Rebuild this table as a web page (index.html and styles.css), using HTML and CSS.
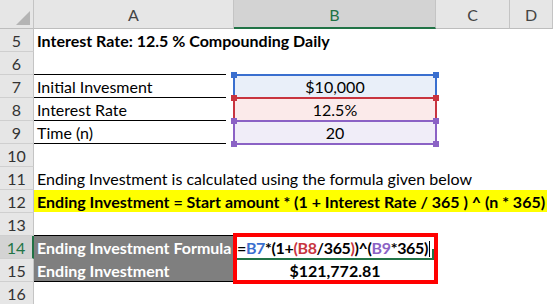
FILE: index.html
```html
<!DOCTYPE html>
<html>
<head>
<meta charset="utf-8">
<link rel="stylesheet" href="styles.css">
</head>
<body>
<div class="sheet">
  <div class="h corner"><svg width="14" height="14" viewBox="0 0 14 14"><polygon points="0,14 14,14 14,0" fill="#b4b4b4"/></svg></div>
  <div class="h col">A</div>
  <div class="h col sel">B</div>
  <div class="h col">C</div>
  <div class="h col">D</div>

  <div class="rh">5</div>
  <div class="c span bold">Interest Rate: 12.5 % Compounding Daily</div>

  <div class="rh">6</div>
  <div class="c bl"></div><div class="c"></div><div class="c"></div><div class="c"></div>

  <div class="rh">7</div>
  <div class="c bl">Initial Invesment</div>
  <div class="c ref r-blue"><span>$10,000</span><div class="box"><i class="sq tl"></i><i class="sq tr"></i><i class="sq bl2"></i><i class="sq br"></i></div></div>
  <div class="c"></div><div class="c"></div>

  <div class="rh">8</div>
  <div class="c bl">Interest Rate</div>
  <div class="c ref r-red"><span>12.5%</span><div class="box"><i class="sq tl"></i><i class="sq tr"></i><i class="sq bl2"></i><i class="sq br"></i></div></div>
  <div class="c"></div><div class="c"></div>

  <div class="rh">9</div>
  <div class="c bl">Time (n)</div>
  <div class="c ref r-purple"><span>20</span><div class="box"><i class="sq tl"></i><i class="sq tr"></i><i class="sq bl2"></i><i class="sq br"></i></div></div>
  <div class="c"></div><div class="c"></div>

  <div class="rh">10</div>
  <div class="c span"></div>

  <div class="rh">11</div>
  <div class="c span">Ending Investment is calculated using the formula given below</div>

  <div class="rh">12</div>
  <div class="c span flush"><span class="hl">Ending Investment = Start amount * (1 + Interest Rate / 365 ) ^ (n * 365)</span></div>

  <div class="rh">13</div>
  <div class="c bb"></div><div class="c"></div><div class="c"></div><div class="c"></div>

  <div class="rh rsel">14</div>
  <div class="c dark">Ending Investment Formula</div>
  <div class="result">
    <div class="f1"><span class="k">=</span><span class="blue">B7</span>*(1+<span class="red">(B8</span>/365<span class="red">)</span>)^(<span class="purple">B9</span>*365)<span class="caret"></span></div>
    <div class="f2">$121,772.81</div>
  </div>
  <div class="c"></div><div class="c"></div>

  <div class="rh">15</div>
  <div class="c dark bb">Ending Investment</div>
  <div class="c"></div><div class="c"></div>

  <div class="rh">16</div>
  <div class="c span"></div>
</div>
</body>
</html>
```
FILE: styles.css
```css
html, body {
  margin: 0;
  padding: 0;
  background: #fff;
  overflow: hidden;
}
.sheet {
  display: grid;
  grid-template-columns: 34px 200px 202px 74px 1fr;
  grid-template-rows: 29px repeat(12, 23px);
  width: 553px;
  height: 304px;
  font-family: Lato, "Open Sans", sans-serif;
  font-size: 16px;
  color: #000;
}
.h {
  box-sizing: border-box;
  background: #e6e6e6;
  border-right: 1px solid #c4c4c4;
  border-bottom: 1px solid #bdbdbd;
  color: #444;
  text-align: center;
  line-height: 28px;
  padding-top: 1px;
}
.corner {
  display: flex;
  justify-content: flex-end;
  align-items: flex-end;
  padding: 0 3px 3px 0;
}
.h.sel {
  background: #d3d3d3;
  color: #217346;
  border-bottom: 2px solid #217346;
}
.rh {
  box-sizing: border-box;
  background: #e6e6e6;
  border-right: 1px solid #c4c4c4;
  border-bottom: 1px solid #cfcfcf;
  color: #333;
  text-align: center;
  line-height: 23px;
}
.rh.rsel {
  background: #d3d3d3;
  color: #217346;
  border-right: 2px solid #217346;
}
.c {
  box-sizing: border-box;
  line-height: 23px;
  padding-left: 3px;
  white-space: nowrap;
  min-width: 0;
}
.span {
  grid-column: 2 / -1;
}
.bold {
  font-weight: bold;
}
.bl {
  background-image: linear-gradient(#000, #000);
  background-repeat: no-repeat;
  background-size: calc(100% - 8px) 1px;
  background-position: left bottom;
}
.bb {
  border-bottom: 1px solid #000;
}
.flush {
  padding-left: 0;
}
.hl {
  display: inline-block;
  height: 22px;
  background: #ffff00;
  font-weight: bold;
  padding: 0 2px 0 3px;
}
.ref {
  position: relative;
  text-align: center;
  padding-left: 0;
}
.r-blue { background: #e9eff9; }
.r-red { background: #fbeaea; }
.r-purple { background: #f0edf8; }
.box {
  position: absolute;
  z-index: 1;
  top: -1px;
  left: -1px;
  right: -1px;
  bottom: -1px;
  border: 2px solid;
}
.r-blue .box { border-color: #3a6fcf; color: #3a6fcf; }
.r-red .box { border-color: #c8343f; color: #c8343f; }
.r-purple .box { border-color: #8b62c5; color: #8b62c5; }
.sq {
  position: absolute;
  width: 6px;
  height: 6px;
  background: currentColor;
}
.sq.tl { top: -4px; left: -4px; }
.sq.tr { top: -4px; right: -4px; }
.sq.bl2 { bottom: -4px; left: -4px; }
.sq.br { bottom: -4px; right: -4px; }
.dark {
  background: #7f7f7f;
  color: #fff;
  font-weight: bold;
}
.result {
  grid-row: span 2;
  position: relative;
  font-weight: bold;
}
.result::after {
  content: "";
  position: absolute;
  top: -3px;
  left: -1px;
  right: -2px;
  bottom: -2px;
  border: 4px solid #ff0000;
}
.f1 {
  box-sizing: border-box;
  height: 24px;
  line-height: 23px;
  padding-left: 3px;
  white-space: nowrap;
  letter-spacing: -0.35px;
  border-bottom: 2px solid #217346;
  position: relative;
}
.f1::after {
  content: "";
  position: absolute;
  right: 2px;
  bottom: -2px;
  width: 2px;
  height: 11px;
  background: #217346;
}
.f2 {
  line-height: 22px;
  text-align: center;
}
.blue { color: #3a6fcf; }
.red { color: #c8343f; }
.purple { color: #8b62c5; }
.caret {
  display: inline-block;
  width: 1px;
  height: 16px;
  background: #000;
  vertical-align: -3px;
  margin-left: 1px;
}
```
